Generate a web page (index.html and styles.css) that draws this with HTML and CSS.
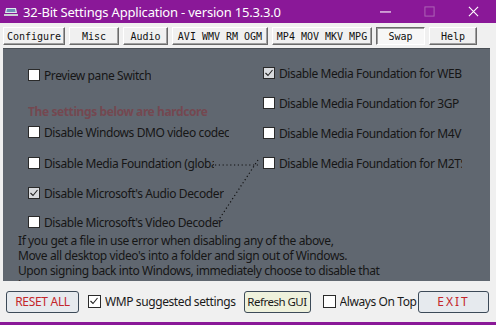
FILE: index.html
```html
<!DOCTYPE html>
<html lang="en">
<head>
    <meta charset="UTF-8">
    <title>32-Bit Settings Application</title>
    <link rel="stylesheet" href="styles.css">
</head>
<body>
    <div class="window">
        <!-- Barra de título -->
        <header class="titlebar">
            <svg class="app-icon" viewBox="0 0 14 10">
                <path d="M2 1h10l1 5H1z" fill="#dfe6ee"/>
                <path d="M3 2h8l.6 3H2.4z" fill="#6d8fb5"/>
                <path d="M0 7h14v2H0z" fill="#c9ccd2"/>
            </svg>
            <span class="title">32-Bit Settings Application - version 15.3.3.0</span>
            <div class="controls">
                <svg class="ctl" viewBox="0 0 12 12"><path d="M0 6.5h12" stroke="#fff" stroke-width="1.2"/></svg>
                <svg class="ctl" viewBox="0 0 12 12"><rect x="1" y="1" width="10" height="10" fill="none" stroke="#b06ab8" stroke-width="1"/></svg>
                <svg class="ctl" viewBox="0 0 12 12"><path d="M1 1l10 10M11 1L1 11" stroke="#fff" stroke-width="1.2"/></svg>
            </div>
        </header>

        <!-- Pestañas -->
        <nav class="tabs">
            <button class="tab w-configure">Configure</button>
            <button class="tab w-misc">Misc</button>
            <button class="tab w-audio">Audio</button>
            <button class="tab w-avi">AVI WMV RM OGM</button>
            <button class="tab w-mp4">MP4 MOV MKV MPG</button>
            <button class="tab tab-active w-swap">Swap</button>
            <button class="tab w-help">Help</button>
        </nav>

        <!-- Panel principal -->
        <section class="panel">
            <div class="cols">
                <div class="col col-left">
                    <label class="opt row-1"><span class="box"></span><span class="txt">Preview pane Switch</span></label>
                    <div class="hardcore">The settings below are hardcore</div>
                    <label class="opt row-2"><span class="box"></span><span class="txt">Disable Windows DMO video codec</span></label>
                    <label class="opt row-3"><span class="box"></span><span class="txt clip-global">Disable Media Foundation (global)</span></label>
                    <label class="opt row-4"><span class="box checked"><svg viewBox="0 0 10 10"><path d="M1.5 5l2.5 2.5L8.5 2" fill="none" stroke="#222" stroke-width="1.1"/></svg></span><span class="txt">Disable Microsoft's Audio Decoder</span></label>
                    <label class="opt row-5"><span class="box"></span><span class="txt">Disable Microsoft's Video Decoder</span></label>
                </div>
                <div class="col col-right">
                    <label class="opt"><span class="box checked"><svg viewBox="0 0 10 10"><path d="M1.5 5l2.5 2.5L8.5 2" fill="none" stroke="#222" stroke-width="1.1"/></svg></span><span class="txt">Disable Media Foundation for WEBM</span></label>
                    <label class="opt"><span class="box"></span><span class="txt">Disable Media Foundation for 3GP</span></label>
                    <label class="opt"><span class="box"></span><span class="txt">Disable Media Foundation for M4V</span></label>
                    <label class="opt"><span class="box"></span><span class="txt">Disable Media Foundation for M2TS</span></label>
                </div>
            </div>
            <p class="note">
                If you get a file in use error when disabling any of the above,<br>
                Move all desktop video's into a folder and sign out of Windows.<br>
                Upon signing back into Windows, immediately choose to disable that<br>
                item.
            </p>
            <!-- Línea punteada de enlace -->
            <svg class="link-line" viewBox="0 0 487 233">
                <path d="M212 116H255M255 111L215 172" fill="none" stroke="#111" stroke-width="1.2" stroke-dasharray="1.2 2.6"/>
            </svg>
        </section>

        <!-- Barra inferior -->
        <footer class="bottom">
            <button class="btn btn-reset">RESET ALL</button>
            <label class="opt opt-bottom wmp"><span class="box checked"><svg viewBox="0 0 10 10"><path d="M1.5 5l2.5 2.5L8.5 2" fill="none" stroke="#222" stroke-width="1.1"/></svg></span><span class="txt">WMP suggested settings</span></label>
            <button class="btn btn-refresh">Refresh GUI</button>
            <label class="opt opt-bottom top"><span class="box"></span><span class="txt">Always On Top</span></label>
            <button class="btn btn-exit">EXIT</button>
        </footer>
    </div>
</body>
</html>
```

FILE: styles.css
```css
/* Estilos generales */
body {
    margin: 0;
    font-family: 'Noto Sans', 'Open Sans', sans-serif;
    background-color: #f0f0f0;
}

.window {
    width: 496px;
    height: 325px;
    overflow: hidden;
    display: flex;
    flex-direction: column;
    background-color: #f0f0f0;
}

/* Barra de título */
.titlebar {
    height: 23px;
    background-color: #8a1898;
    display: flex;
    align-items: center;
    color: #fff;
}

.app-icon {
    width: 14px;
    height: 10px;
    margin: 0 5px 0 4px;
}

.title {
    font-size: 13px;
    letter-spacing: -0.2px;
}

.controls {
    margin-left: auto;
    display: flex;
    align-items: center;
}

.ctl {
    width: 11px;
    height: 11px;
    margin-right: 33px;
}

.ctl:last-child {
    margin-right: 17px;
}

/* Pestañas */
.tabs {
    height: 25px;
    display: flex;
    align-items: flex-start;
    gap: 4px;
    padding: 4px 0 0 3px;
    box-sizing: border-box;
}

.tab {
    height: 18px;
    padding: 0;
    font-family: 'DejaVu Sans Mono', 'Liberation Mono', monospace;
    font-size: 10px;
    color: #111;
    background-color: #f0f0f0;
    border: 1px solid;
    border-color: #ffffff #6a6a6a #6a6a6a #ffffff;
    box-shadow: inset -1px -1px 0 #a0a0a0;
}

.tab-active {
    border-color: #6a6a6a #ffffff #ffffff #6a6a6a;
    box-shadow: inset 1px 1px 0 #a0a0a0;
    background-color: #f7f7f7;
}

.w-configure { width: 62px; }
.w-misc { width: 50px; }
.w-audio { width: 45px; }
.w-avi { width: 96px; }
.w-mp4 { width: 100px; }
.w-swap { width: 49px; }
.w-help { width: 48px; }

/* Panel principal */
.panel {
    position: relative;
    height: 233px;
    margin: 0 6px 0 3px;
    background-color: #606770;
    border-top: 1px solid #4a4f55;
    box-sizing: border-box;
    overflow: hidden;
    color: #161616;
    font-size: 12px;
    letter-spacing: -0.4px;
}

.cols {
    display: flex;
    padding: 19px 0 0 25px;
}

.col {
    display: flex;
    flex-direction: column;
}

.col-left {
    width: 235px;
}

.col-right {
    width: 199px;
    gap: 16px;
    margin-top: -2px;
}

.opt {
    display: flex;
    align-items: center;
    height: 14px;
    white-space: nowrap;
}

.txt {
    overflow: hidden;
}

.col-right .txt {
    width: 184px;
}

.clip-global {
    width: 170px;
}

.box {
    width: 12px;
    height: 12px;
    box-sizing: border-box;
    border: 1px solid #2a2a2a;
    background-color: #fff;
    margin-right: 4px;
    flex-shrink: 0;
    display: flex;
}

.box.checked {
    background-color: #d9dbde;
}

.box svg {
    width: 10px;
    height: 10px;
}

.hardcore {
    height: 14px;
    line-height: 14px;
    margin-top: 23px;
    font-weight: bold;
    color: #744850;
}

.row-2 { margin-top: 6px; }
.row-3 { margin-top: 17px; }
.row-4 { margin-top: 16px; }
.row-5 { margin-top: 15px; }

.note {
    margin: 4px 0 0 15px;
    line-height: 15px;
    white-space: nowrap;
}

.link-line {
    position: absolute;
    left: 0;
    top: 0;
    width: 487px;
    height: 233px;
    pointer-events: none;
}

/* Barra inferior */
.bottom {
    height: 41px;
    display: flex;
    align-items: center;
    padding: 0 7px 0 6px;
    border-bottom: 3px solid #8a1898;
    font-size: 12px;
    letter-spacing: -0.4px;
    color: #1a1a1a;
}

.btn {
    height: 22px;
    padding: 0;
    font-family: 'Noto Sans', sans-serif;
    font-size: 12px;
    letter-spacing: -0.3px;
    white-space: nowrap;
    border: 1px solid #3c4a58;
    border-radius: 3px;
}

.btn-reset {
    width: 73px;
    color: #c4262b;
    background-color: #e6eaee;
}

.btn-refresh {
    width: 67px;
    margin-left: 8px;
    font-size: 11.5px;
    letter-spacing: -0.5px;
    color: #1a1a1a;
    background-color: #eef1dc;
}

.btn-exit {
    width: 71px;
    margin-left: auto;
    color: #c4262b;
    background-color: #e6eaee;
    letter-spacing: 2px;
}

.opt-bottom .box {
    width: 13px;
    height: 13px;
    background-color: #fff;
}

.wmp {
    margin-left: 9px;
}

.top {
    margin-left: 12px;
}
```
